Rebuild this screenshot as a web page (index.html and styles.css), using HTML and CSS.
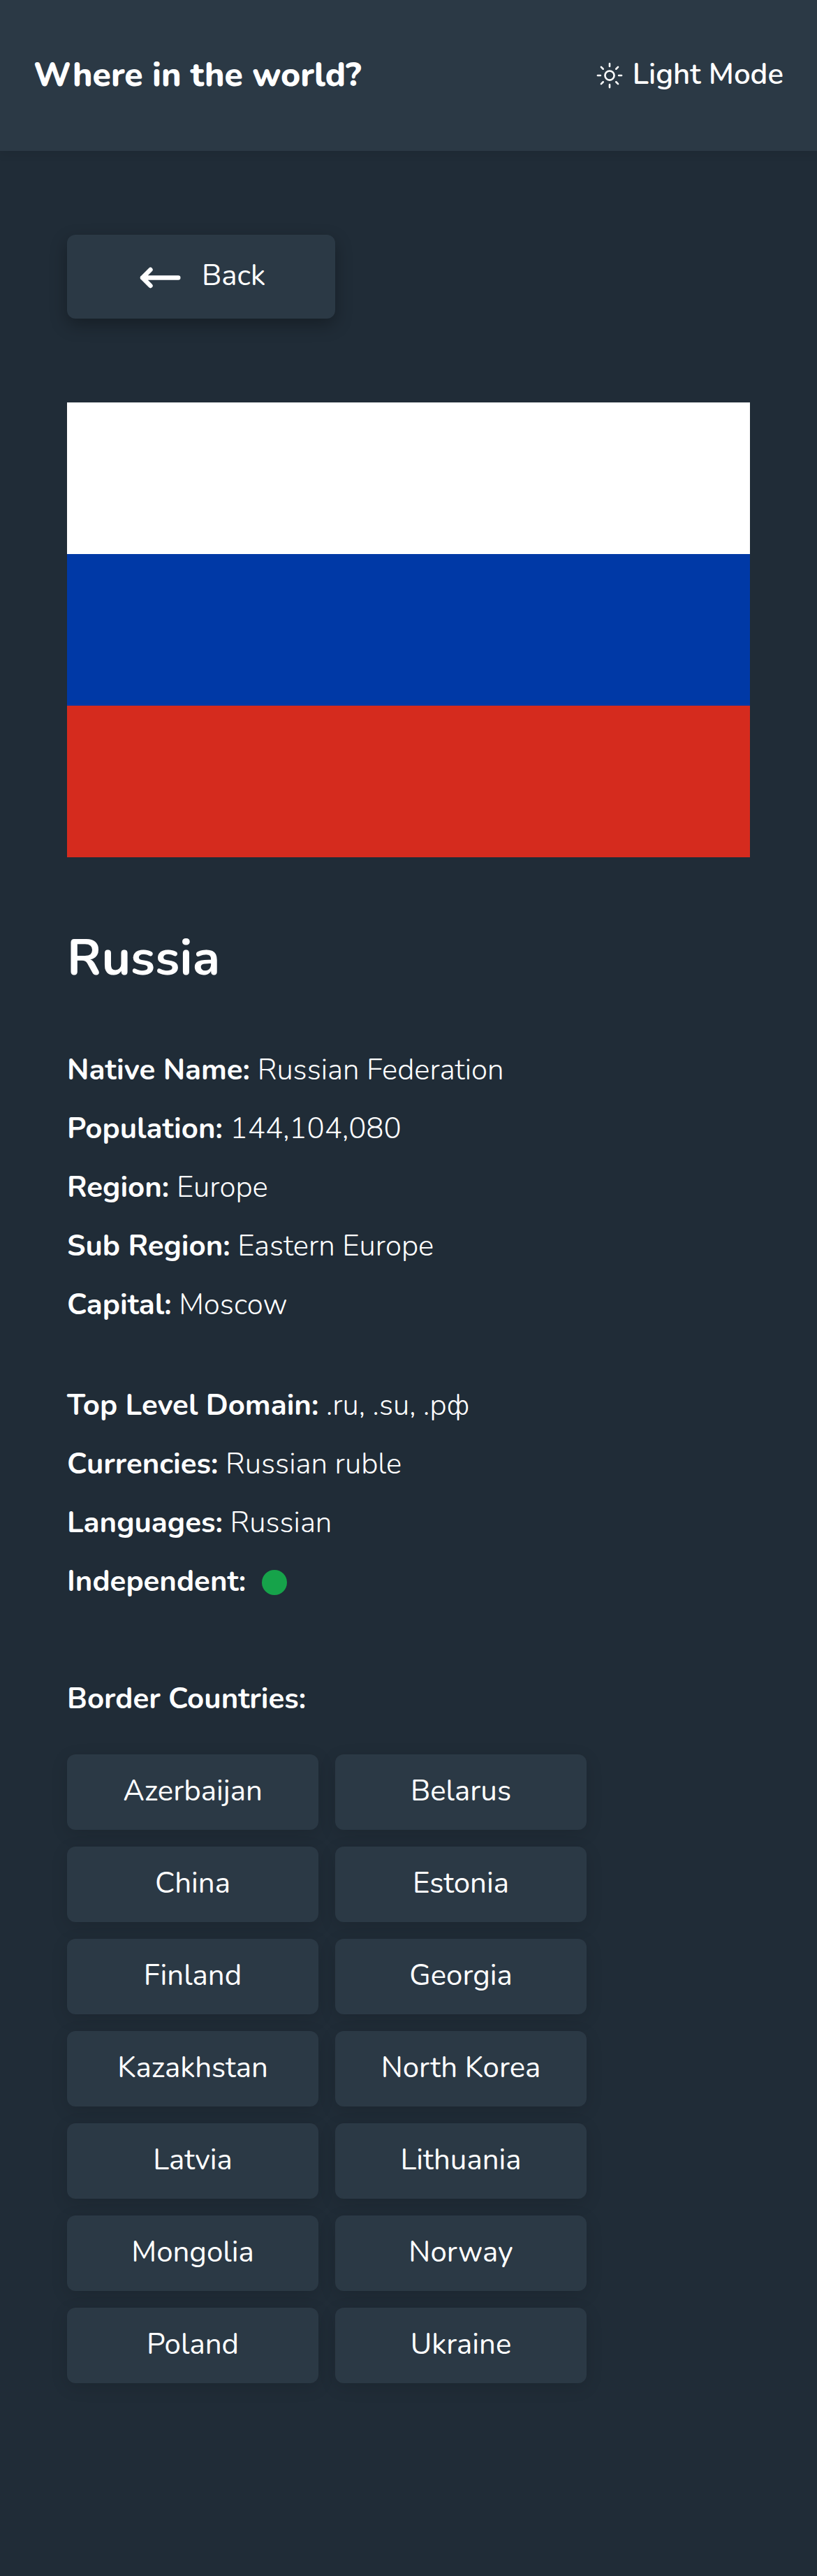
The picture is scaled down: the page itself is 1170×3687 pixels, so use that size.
FILE: index.html
```html
<!DOCTYPE html>
<html lang="en">
<head>
<meta charset="utf-8">
<title>Where in the world?</title>
<link rel="stylesheet" href="styles.css">
</head>
<body>
<header class="header">
  <h1 class="brand">Where in the world?</h1>
  <button class="theme" type="button">
    <svg class="sun" viewBox="0 0 512 512" aria-hidden="true"><path d="M256 48v48M256 416v48M403.08 108.92l-33.94 33.94M142.86 369.14l-33.94 33.94M464 256h-48M96 256H48M403.08 403.08l-33.94-33.94M142.86 142.86l-33.94-33.94"/><circle cx="256" cy="256" r="80"/></svg>
    <span>Light Mode</span>
  </button>
</header>
<main class="main">
  <a class="back" href="#">
    <svg class="arrow" viewBox="0 0 60 36" aria-hidden="true"><path d="M5 19.500H56.300M16.500 8L5 19.500L16.500 31"/></svg>
    <span>Back</span>
  </a>
  <svg class="flag" viewBox="0 0 9 6" preserveAspectRatio="none" role="img" aria-label="Flag of Russia"><path fill="#fff" d="M0 0h9v3H0z"/><path fill="#d52b1e" d="M0 3h9v3H0z"/><path fill="#0039a6" d="M0 2h9v2H0z"/></svg>
  <h2 class="name">Russia</h2>
  <ul class="facts">
    <li><b>Native Name:</b> Russian Federation</li>
    <li><b>Population:</b> 144,104,080</li>
    <li><b>Region:</b> Europe</li>
    <li><b>Sub Region:</b> Eastern Europe</li>
    <li><b>Capital:</b> Moscow</li>
  </ul>
  <ul class="facts">
    <li><b>Top Level Domain:</b> .ru, .su, .рф</li>
    <li><b>Currencies:</b> Russian ruble</li>
    <li><b>Languages:</b> Russian</li>
    <li class="flagged"><b>Independent:</b><span class="dot"></span></li>
  </ul>
  <h3 class="borders-title">Border Countries:</h3>
  <nav class="borders">
    <a href="#">Azerbaijan</a>
    <a href="#">Belarus</a>
    <a href="#">China</a>
    <a href="#">Estonia</a>
    <a href="#">Finland</a>
    <a href="#">Georgia</a>
    <a href="#">Kazakhstan</a>
    <a href="#">North Korea</a>
    <a href="#">Latvia</a>
    <a href="#">Lithuania</a>
    <a href="#">Mongolia</a>
    <a href="#">Norway</a>
    <a href="#">Poland</a>
    <a href="#">Ukraine</a>
  </nav>
</main>
</body>
</html>
```
FILE: styles.css
```css
* { box-sizing: border-box; margin: 0; padding: 0; }

body {
  min-height: 3687px;
  background: #202c37;
  color: #fff;
  font: 300 42px/84px Nunito, Lato, sans-serif;
}

.header {
  display: flex;
  align-items: center;
  justify-content: space-between;
  height: 216px;
  padding: 0 48px;
  background: #2b3945;
  box-shadow: 0 6px 12px rgba(0, 0, 0, .06);
}

.brand { padding-bottom: 2px; font-size: 48px; font-weight: 800; line-height: 72px; }

.theme {
  display: flex;
  align-items: center;
  gap: 12px;
  border: 0;
  background: none;
  color: inherit;
  font: 600 42px/60px Nunito, Lato, sans-serif;
}

.theme span { padding-bottom: 2px; }

.sun, .arrow { fill: none; stroke: currentColor; stroke-linecap: round; stroke-linejoin: round; }
.sun { width: 42px; height: 42px; stroke-width: 32; }
.arrow { width: 60px; height: 36px; stroke-width: 6.4; }

.main { padding: 120px 96px 0; }

.back {
  display: flex;
  align-items: center;
  justify-content: center;
  gap: 30px;
  width: 384px;
  height: 120px;
  padding-left: 3px;
  border-radius: 12px;
  background: #2b3945;
  box-shadow: 0 9px 24px rgba(0, 0, 0, .3);
  color: inherit;
  font-weight: 400;
  line-height: 60px;
  text-decoration: none;
}

.back span { padding-bottom: 2px; }

.flag { display: block; width: 978px; height: 651px; margin: 120px 0 90px; }

.name { margin-bottom: 65px; font-size: 72px; font-weight: 700; line-height: 108px; }

.facts { margin-bottom: 60px; list-style: none; }
.facts b, .borders-title { font-size: 42px; font-weight: 700; }
.flagged { display: flex; align-items: center; gap: 23px; }
.dot { width: 36px; height: 36px; margin-top: 2px; border-radius: 50%; background: #16a34a; }

.borders-title { padding-top: 24px; margin-bottom: 37px; }

.borders { display: grid; grid-template-columns: 360px 360px; gap: 24px; }

.borders a {
  height: 108px;
  padding-top: 23px;
  border-radius: 12px;
  background: #2b3945;
  box-shadow: 0 6px 24px rgba(0, 0, 0, .12);
  color: inherit;
  font-weight: 400;
  line-height: 60px;
  text-align: center;
  text-decoration: none;
}
```
